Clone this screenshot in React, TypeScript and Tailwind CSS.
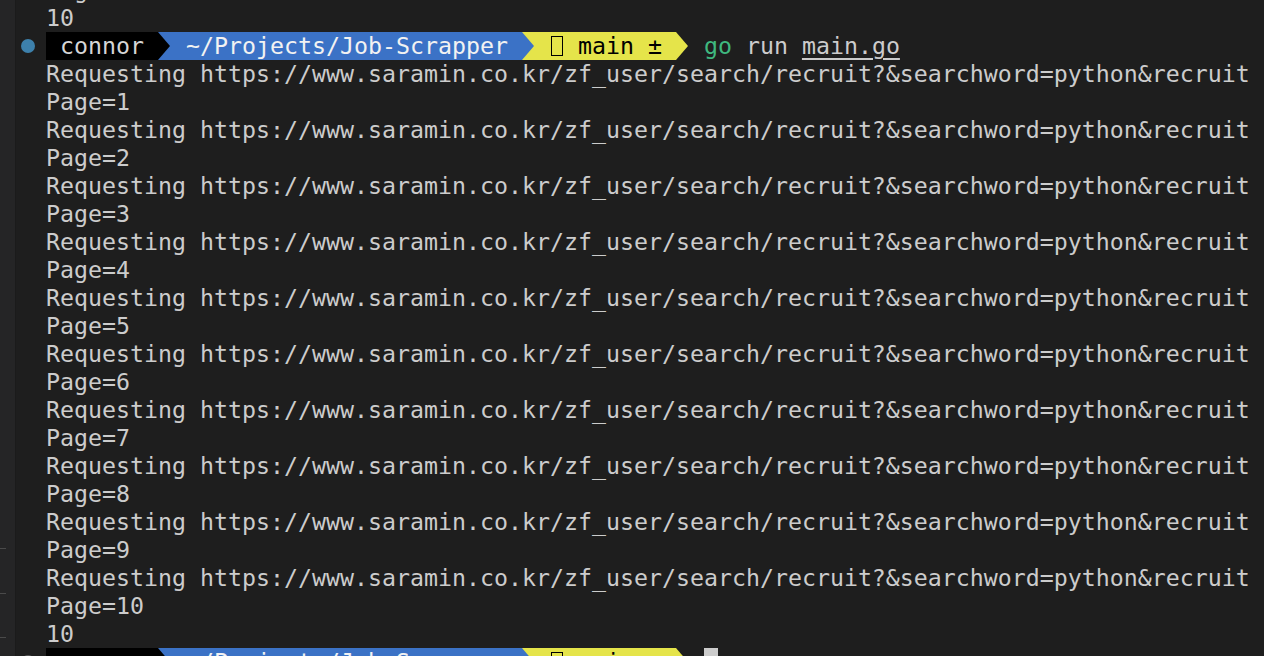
const URL = 'https://www.saramin.co.kr/zf_user/search/recruit?&searchword=python&recruit';

const pages = Array.from({ length: 10 }, (_, i) => i + 1);

function Arrow({ from, to }: { from: string; to?: string }) {
    return (
        <svg width="14" height="28" viewBox="0 0 14 28" className="block shrink-0" style={{ background: to ?? 'transparent' }}>
            <polygon points="0,0 12,14 0,28" fill={from} />
        </svg>
    );
}

function Prompt({ dot, children }: { dot: 'blue' | 'gray'; children?: React.ReactNode }) {
    return (
        <div className="flex h-[28px] items-center">
            <div className="w-[30px] h-[28px] flex items-center pl-[5px]">
                <span className={`block w-[14px] h-[14px] rounded-full ${dot === 'blue' ? 'bg-[#3d80ab]' : 'bg-[#5a5a5a]'}`} />
            </div>
            <span className="bg-black text-[#d6d6d6] h-[28px]">{' connor '}</span>
            <Arrow from="#000000" to="#3b72c6" />
            <span className="bg-[#3b72c6] text-[#f2f2f2] h-[28px]">{' ~/Projects/Job-Scrapper '}</span>
            <Arrow from="#3b72c6" to="#e5e44a" />
            <span className="bg-[#e5e44a] text-black h-[28px]">
                {' '}
                <span className="inline-flex w-[14px] h-[28px] items-center justify-center align-top">
                    <span className="block w-[12px] h-[20px] border-[1.5px] border-black" />
                </span>
                {' main ± '}
            </span>
            <Arrow from="#e5e44a" />
            {children}
        </div>
    );
}

function Line({ children }: { children: React.ReactNode }) {
    return <div className="h-[28px] pl-[30px]">{children}</div>;
}

export default function App() {
    return (
        <div
            className="w-[1264px] h-[656px] overflow-hidden bg-[#1e1e1e] text-[#cccccc] flex"
            style={{ fontFamily: '"DejaVu Sans Mono", "Liberation Mono", monospace' }}
        >
            <div className="w-[16px] h-full bg-[#252526] border-r border-[#1b1b1b] relative shrink-0">
                <span className="absolute left-0 top-[548px] w-[6px] h-[1px] bg-[#4a4a4a]" />
                <span className="absolute left-0 top-[593px] w-[6px] h-[1px] bg-[#4a4a4a]" />
                <span className="absolute left-0 top-[637px] w-[6px] h-[1px] bg-[#4a4a4a]" />
            </div>
            <div className="flex-1 mt-[-24px] text-[23.25px] leading-[28px] whitespace-pre">
                <Line>Page=10</Line>
                <Line>10</Line>
                <Prompt dot="blue">
                    <span>{' '}</span>
                    <span className="text-[#3fb87f]">go</span>
                    <span>{' run '}</span>
                    <span className="underline underline-offset-[4px] decoration-[1.5px]">main.go</span>
                </Prompt>
                {pages.map((p) => (
                    <div key={p}>
                        <Line>Requesting {URL}</Line>
                        <Line>Page={p}</Line>
                    </div>
                ))}
                <Line>10</Line>
                <Prompt dot="gray">
                    <span>{' '}</span>
                    <span className="inline-block w-[14px] h-[28px] bg-[#cccccc]" />
                </Prompt>
            </div>
        </div>
    );
}
